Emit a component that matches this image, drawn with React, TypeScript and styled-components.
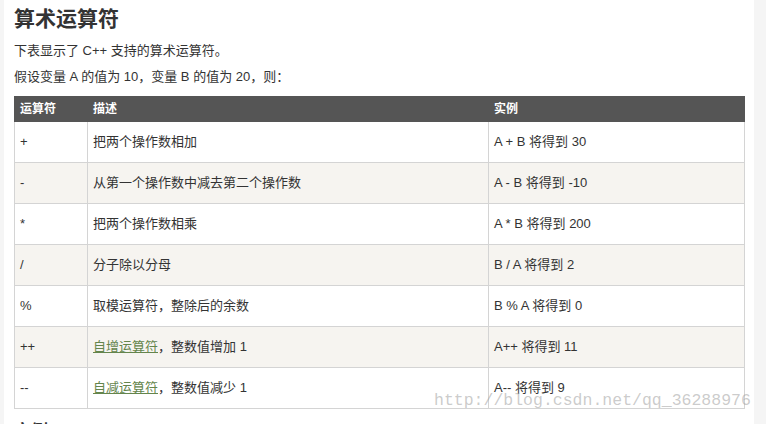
import styled, { createGlobalStyle } from "styled-components";

const GlobalStyle = createGlobalStyle`
  html, body {
    margin: 0;
    padding: 0;
    background: #f5f5f5;
  }
  body {
    font-family: "Helvetica Neue", Helvetica, "Liberation Sans", "Noto Sans CJK SC", sans-serif;
    color: #333;
    font-size: 13px;
  }
`;

const Page = styled.div`
  position: relative;
  width: 766px;
  height: 424px;
  overflow: hidden;
  display: flex;
  padding-left: 4px;
  box-sizing: border-box;
`;

const Article = styled.div`
  width: 750px;
  flex: none;
  background: #fff;
  padding: 0 10px;
  box-sizing: border-box;
`;

const Title = styled.h2`
  font-size: 21px;
  line-height: 30px;
  font-weight: bold;
  margin: 4px 0 7px;
  color: #333;
`;

const Para = styled.p`
  margin: 0 0 6px;
  line-height: 20px;
  font-size: 13px;
`;

const Table = styled.table`
  width: 730px;
  border-collapse: collapse;
  table-layout: fixed;
  margin-top: 9px;
  font-size: 13px;
`;

const Head = styled.th<{ $w: number }>`
  box-sizing: border-box;
  width: ${(p) => p.$w}px;
  background: #555;
  color: #fff;
  font-size: 12px;
  font-weight: bold;
  text-align: left;
  padding: 5px 5px;
  line-height: 14px;
  border: 1px solid #555;
`;

const Row = styled.tr<{ $alt: boolean }>`
  background: ${(p) => (p.$alt ? "#f6f4f0" : "#fff")};
`;

const Cell = styled.td`
  border: 1px solid #d4d4d4;
  padding: 10px 5px;
  line-height: 20px;
  vertical-align: middle;
`;

const Link = styled.a`
  color: #64854c;
  text-decoration: underline;
`;

const SubTitle = styled.h2`
  font-size: 17px;
  line-height: 24px;
  margin: 11px 0 0;
  font-weight: bold;
`;

const Watermark = styled.div`
  position: absolute;
  left: 434px;
  top: 390px;
  font-family: "Liberation Mono", "DejaVu Sans Mono", monospace;
  font-size: 16.5px;
  line-height: 22px;
  color: rgba(160, 160, 160, 0.55);
  pointer-events: none;
  white-space: nowrap;
`;

const rows: { op: string; desc: React.ReactNode; ex: string }[] = [
  { op: "+", desc: "把两个操作数相加", ex: "A + B 将得到 30" },
  { op: "-", desc: "从第一个操作数中减去第二个操作数", ex: "A - B 将得到 -10" },
  { op: "*", desc: "把两个操作数相乘", ex: "A * B 将得到 200" },
  { op: "/", desc: "分子除以分母", ex: "B / A 将得到 2" },
  { op: "%", desc: "取模运算符，整除后的余数", ex: "B % A 将得到 0" },
  {
    op: "++",
    desc: (
      <>
        <Link href="#">自增运算符</Link>，整数值增加 1
      </>
    ),
    ex: "A++ 将得到 11",
  },
  {
    op: "--",
    desc: (
      <>
        <Link href="#">自减运算符</Link>，整数值减少 1
      </>
    ),
    ex: "A-- 将得到 9",
  },
];

const App = () => {
  return (
    <>
      <GlobalStyle />
      <Page>
        <Article>
          <Title>算术运算符</Title>
          <Para>下表显示了 C++ 支持的算术运算符。</Para>
          <Para>假设变量 A 的值为 10，变量 B 的值为 20，则：</Para>
          <Table>
            <thead>
              <tr>
                <Head $w={73}>运算符</Head>
                <Head $w={401}>描述</Head>
                <Head $w={256}>实例</Head>
              </tr>
            </thead>
            <tbody>
              {rows.map((r, i) => (
                <Row key={r.op} $alt={i % 2 === 1}>
                  <Cell>{r.op}</Cell>
                  <Cell>{r.desc}</Cell>
                  <Cell>{r.ex}</Cell>
                </Row>
              ))}
            </tbody>
          </Table>
          <SubTitle>实例</SubTitle>
        </Article>
        <Watermark>http://blog.csdn.net/qq_36288976</Watermark>
      </Page>
    </>
  );
};

export default App;
